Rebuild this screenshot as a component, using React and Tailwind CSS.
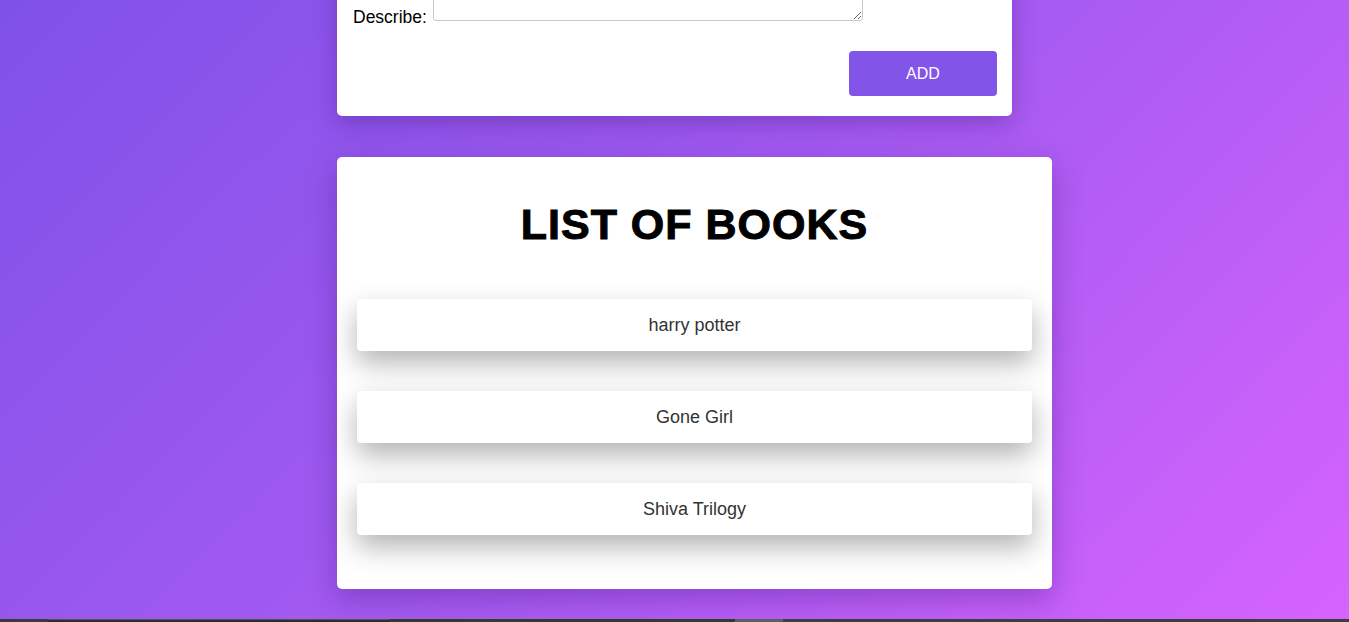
import React, { useState } from 'react';

const books = ['harry potter', 'Gone Girl', 'Shiva Trilogy'];

const App = () => {
    const [describe, setDescribe] = useState('');

    return (
        <div className="h-screen flex flex-col overflow-hidden font-['Liberation_Sans',Arial,sans-serif]">
            <div className="flex-1 overflow-hidden bg-[linear-gradient(135deg,#7f51e8_0%,#a85bf2_55%,#d663fd_100%)]">
                <div className="w-[675px] mx-auto">
                    {/* Add form (scrolled so only its lower part shows) */}
                    <div className="-mt-[59px] bg-white rounded-[5px] shadow-[0_8px_24px_rgba(60,20,120,0.35)] pl-4 pr-[15px] pt-4 pb-5">
                        <div className="flex items-end">
                            <label className="text-[17.5px] leading-none text-black -mb-[5px]">Describe:</label>
                            <textarea
                                value={describe}
                                onChange={(e) => setDescribe(e.target.value)}
                                className="ml-[6px] w-[430px] h-[64px] border border-[#c8c8c8] rounded-[3px] bg-white"
                            />
                        </div>
                        <div className="flex justify-end mt-[30px]">
                            <button className="w-[148px] h-[45px] rounded-[4px] bg-[#8254e8] text-white text-[16px]">
                                ADD
                            </button>
                        </div>
                    </div>

                    {/* Book list */}
                    <div className="w-[715px] mt-[41px] bg-white rounded-[5px] shadow-[0_10px_30px_rgba(60,20,120,0.35)] pt-[43px] pb-[54px]">
                        <h1 className="text-center text-[43px] leading-[1.15] font-bold text-black tracking-[1px] [-webkit-text-stroke:1px_black]">
                            LIST OF BOOKS
                        </h1>
                        <div className="mt-[50px] mx-5 flex flex-col gap-10">
                            {books.map((b) => (
                                <div
                                    key={b}
                                    className="h-[52px] rounded-[4px] bg-white flex items-center justify-center text-[18px] text-[#333] shadow-[0_12px_28px_rgba(0,0,0,0.3)]"
                                >
                                    {b}
                                </div>
                            ))}
                        </div>
                    </div>
                </div>
            </div>
            {/* bottom strip */}
            <div className="h-[3px] flex shrink-0">
                <div className="w-[48px] bg-[#3b3b3b]" />
                <div className="w-[342px] bg-[#2c2c2c] border-t border-[#555]" />
                <div className="w-[345px] bg-[#343a2e]" />
                <div className="w-[48px] bg-[#5e5e5e]" />
                <div className="flex-1 bg-[#3d3d3d]" />
            </div>
        </div>
    );
};

export default App;
